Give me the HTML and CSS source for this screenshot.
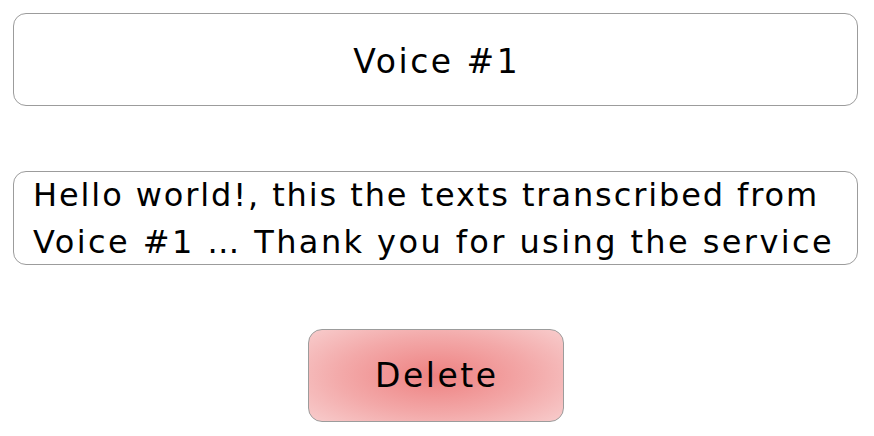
FILE: index.html
```html
<!DOCTYPE html>
<html>
<head>
<meta charset="utf-8">
<link rel="stylesheet" href="styles.css">
</head>
<body>
<main class="page">
  <div class="title-box"><span class="spaced">Voice #1</span></div>
  <div class="text-box"><span class="line line-1">Hello world!, this the texts transcribed from</span><span class="line line-2">Voice #1 … Thank you for using the service</span></div>
  <div class="actions"><button class="delete-btn"><span class="spaced">Delete</span></button></div>
</main>
</body>
</html>
```
FILE: styles.css
```css
html, body {
  margin: 0;
  padding: 0;
  background: #ffffff;
}
.page {
  width: 874px;
  box-sizing: border-box;
  padding: 13px 16px 0 13px;
  display: flex;
  flex-direction: column;
  font-family: "DejaVu Sans", sans-serif;
  color: #000;
}
.spaced {
  letter-spacing: 2.5px;
  padding-left: 2.5px;
}
.title-box {
  height: 93px;
  box-sizing: border-box;
  border: 1px solid #9c9c9c;
  border-radius: 13px;
  display: flex;
  align-items: center;
  justify-content: center;
  font-size: 33px;
  padding-top: 3px;
}
.text-box {
  margin-top: 65px;
  height: 94px;
  box-sizing: border-box;
  border: 1px solid #9c9c9c;
  border-radius: 13px;
  padding: 0 0 0 19px;
  font-size: 32px;
  line-height: 47px;
  white-space: nowrap;
}
.line {
  display: block;
}
.line-1 {
  letter-spacing: 1.9px;
}
.line-2 {
  letter-spacing: 2.4px;
}
.actions {
  margin-top: 64px;
  display: flex;
  justify-content: center;
}
.delete-btn {
  width: 256px;
  height: 93px;
  box-sizing: border-box;
  border: 1px solid #9c9c9c;
  border-radius: 14px;
  background: radial-gradient(ellipse 75% 85% at 50% 50%, #ee8181 0%, #f3a9a9 50%, #f9d6d6 100%);
  font-family: "DejaVu Sans", sans-serif;
  font-size: 33px;
  color: #000;
  padding: 0;
}
```
